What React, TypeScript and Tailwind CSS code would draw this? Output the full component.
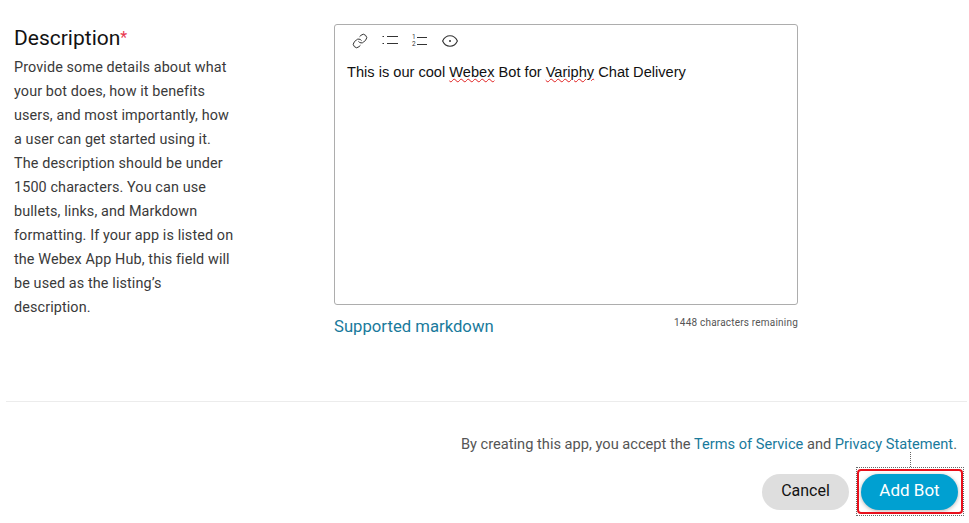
import { Link } from 'lucide-react'

const helpLines = [
  'Provide some details about what',
  'your bot does, how it benefits',
  'users, and most importantly, how',
  'a user can get started using it.',
  'The description should be under',
  '1500 characters. You can use',
  'bullets, links, and Markdown',
  'formatting. If your app is listed on',
  'the Webex App Hub, this field will',
  'be used as the listing’s',
  'description.',
]

function BulletIcon() {
  return (
    <svg width="16" height="12" viewBox="0 0 16 12" fill="none" stroke="#333" strokeWidth="1">
      <path d="M5 1.5h11M5 8.5h11" />
      <path d="M0.5 1.5h1.5M0.5 8.5h1.5" />
    </svg>
  )
}

function NumberIcon() {
  return (
    <div className="relative h-[15px] w-[16px] text-[6.5px] leading-[7.6px] text-[#333]">
      <div>1</div>
      <div>2</div>
      <div className="absolute left-[5px] top-[3px] h-px w-[10px] bg-[#333]" />
      <div className="absolute left-[5px] top-[10px] h-px w-[10px] bg-[#333]" />
    </div>
  )
}

function EyeIcon() {
  return (
    <svg width="16" height="12" viewBox="0 0 16 12" fill="none" stroke="#333" strokeWidth="1.1">
      <path d="M0.6 6C2.5 2 5 0.8 8 0.8S13.5 2 15.4 6C13.5 10 11 11.2 8 11.2S2.5 10 0.6 6Z" />
      <circle cx="8" cy="6" r="1" fill="#333" stroke="none" />
    </svg>
  )
}

function Squiggle({ children }: { children: string }) {
  return (
    <span className="underline decoration-[#e02020] decoration-wavy decoration-1 underline-offset-[1px]">
      {children}
    </span>
  )
}

export default function App() {
  return (
    <div className="h-[523px] w-[969px] overflow-hidden bg-white font-['Roboto',sans-serif]">
      <div className="flex pt-[24px]">
        {/* Help column */}
        <div className="ml-[14px] w-[320px]">
          <h2 className="flex items-start text-[21px] leading-[28px] text-[#121212]">
            Description<span className="text-[16px] text-[#e8384f]">*</span>
          </h2>
          <div className="mt-[4px] text-[14.4px] leading-[24px] tracking-[0.11px] text-[#3a3a3a]">
            {helpLines.map((line) => (
              <div key={line}>{line}</div>
            ))}
          </div>
        </div>

        {/* Editor */}
        <div className="w-[464px]">
          <div className="h-[281px] rounded-[3px] border border-[#adadad] bg-white">
            <div className="flex h-[31px] items-center pl-[17px] pt-[1px]">
              <Link className="mr-[14px] h-[16px] w-[16px] text-[#333]" strokeWidth={1.5} />
              <div className="mr-[14px]"><BulletIcon /></div>
              <div className="mr-[14px]"><NumberIcon /></div>
              <EyeIcon />
            </div>
            <p className="mt-[6px] pl-[12px] font-['Liberation_Sans',sans-serif] text-[14.62px] leading-[20px] text-[#111]">
              This is our cool <Squiggle>Webex</Squiggle> Bot for <Squiggle>Variphy</Squiggle> Chat Delivery
            </p>
          </div>
          <div className="mt-[9px] flex items-start justify-between">
            <a className="text-[16.7px] leading-[26px] text-[#197a9c]">Supported markdown</a>
            <span className="mt-[2px] text-[10px] leading-[14px] tracking-[0.2px] text-[#555]">1448 characters remaining</span>
          </div>
        </div>
      </div>

      {/* Footer */}
      <div className="mx-[6px] mt-[61px] w-[961px] border-t border-[#ececec]" />
      <div className="mt-[32px] flex justify-end pr-[12px] text-[14.63px] leading-[20px] text-[#555]">
        <span>
          By creating this app, you accept the <a className="text-[#197a9c]">Terms of Service</a> and{' '}
          <a className="text-[#197a9c]">Privacy Statement</a>.
        </span>
      </div>
      <div className="mt-[20px] flex items-center justify-end gap-[12px] pr-[11px]">
        <button className="h-[36px] w-[87px] rounded-full bg-[#dedede] pb-[2px] text-[16px] text-[#121212]">Cancel</button>
        <div className="relative">
          <button className="h-[36px] w-[97px] rounded-full bg-[#00a0d1] pb-[2px] text-[17px] text-white shadow-[0_1px_4px_rgba(0,0,0,0.3)]">
            Add Bot
          </button>
          {/* Annotation marks over the button */}
          <div className="absolute -bottom-[4px] -left-[4px] -right-[5px] -top-[5px] rounded-[4px] border-2 border-[#e8101c]" />
          <div className="absolute -bottom-[6px] -left-[5px] -right-[6px] -top-[7px] border border-dotted border-[#666]" />
          <div className="absolute left-1/2 top-[-22px] h-[15px] border-l border-dotted border-[#666]" />
        </div>
      </div>
    </div>
  )
}
